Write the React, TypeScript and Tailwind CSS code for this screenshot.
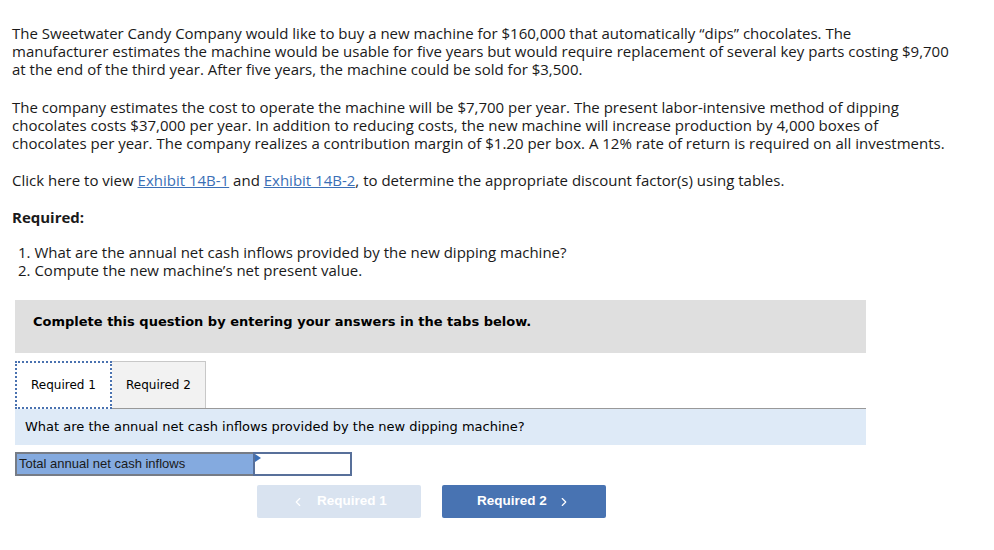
import { ChevronLeft, ChevronRight } from "lucide-react";

const body = { fontFamily: "'Open Sans', Lato, sans-serif" };
const verdana = { fontFamily: "'DejaVu Sans', Verdana, sans-serif" };
const arial = { fontFamily: "'Liberation Sans', Arial, sans-serif" };

export default function App() {
  return (
    <div className="min-h-[550px] w-[994px] bg-white text-[#1a1a1a]">
      <div className="px-3 pt-[24px] text-[15px] leading-[18px]" style={body}>
        <p>
          The Sweetwater Candy Company would like to buy a new machine for $160,000 that automatically “dips” chocolates. The
          <br />
          manufacturer estimates the machine would be usable for five years but would require replacement of several key parts costing $9,700
          <br />
          at the end of the third year. After five years, the machine could be sold for $3,500.
        </p>
        <p className="mt-[20px]">
          The company estimates the cost to operate the machine will be $7,700 per year. The present labor-intensive method of dipping
          <br />
          chocolates costs $37,000 per year. In addition to reducing costs, the new machine will increase production by 4,000 boxes of
          <br />
          chocolates per year. The company realizes a contribution margin of $1.20 per box. A 12% rate of return is required on all investments.
        </p>
        <p className="mt-[19px]">
          Click here to view{" "}
          <span className="text-[#3b6fb6] underline">Exhibit 14B-1</span> and{" "}
          <span className="text-[#3b6fb6] underline">Exhibit 14B-2</span>, to determine the appropriate discount factor(s) using tables.
        </p>
        <p className="mt-[19px] font-bold">Required:</p>
        <ol className="mt-[17px] pl-[6px]">
          <li>1. What are the annual net cash inflows provided by the new dipping machine?</li>
          <li>2. Compute the new machine’s net present value.</li>
        </ol>
      </div>

      <div className="ml-[15px] w-[851px]">
        <div
          className="mt-[21px] h-[53px] bg-[#dfdfdf] px-[18px] pt-[14px] text-[13px] leading-[16px] font-bold text-black"
          style={verdana}
        >
          Complete this question by entering your answers in the tabs below.
        </div>

        <div className="mt-[8px] flex h-[48px] items-end border-b border-[#999]" style={verdana}>
          <div className="relative z-10 -mb-px flex h-[48px] w-[97px] items-center justify-center border-2 border-dotted border-[#4a72b0] bg-white text-[12px] text-black">
            Required 1
          </div>
          <div className="flex h-[47px] w-[94px] items-center justify-center border border-l-0 border-b-0 border-[#c8c8c8] bg-[#f2f2f2] text-[12px] text-black">
            Required 2
          </div>
        </div>

        <div className="flex h-[36px] items-center bg-[#deeaf7] px-[10px] text-[13px] text-black" style={verdana}>
          What are the annual net cash inflows provided by the new dipping machine?
        </div>

        <div className="mt-[7px] flex h-[24px]" style={arial}>
          <div className="flex w-[238px] items-center border-2 border-r-0 border-[#767c86] bg-[#84aadf] pl-[2px] text-[13px] text-[#1a1a1a]">
            Total annual net cash inflows
          </div>
          <div className="relative w-[99px] border-2 border-[#58709a] bg-white">
            <div className="absolute left-0 top-0 h-0 w-0 border-y-[4px] border-l-[6px] border-y-transparent border-l-[#3b6fb6]" />
          </div>
        </div>

        <div className="ml-[242px] mt-[9px] flex gap-[21px]" style={arial}>
          <div className="flex h-[33px] w-[164px] items-center justify-center gap-[12px] rounded-[2px] bg-[#d9e3f0] text-[13.5px] font-bold text-white">
            <ChevronLeft size={14} strokeWidth={2} />
            Required 1
          </div>
          <div className="flex h-[33px] w-[164px] items-center justify-center gap-[10px] rounded-[2px] bg-[#4873b2] text-[13.5px] font-bold text-white">
            Required 2
            <ChevronRight size={14} strokeWidth={2} />
          </div>
        </div>
      </div>
    </div>
  );
}
